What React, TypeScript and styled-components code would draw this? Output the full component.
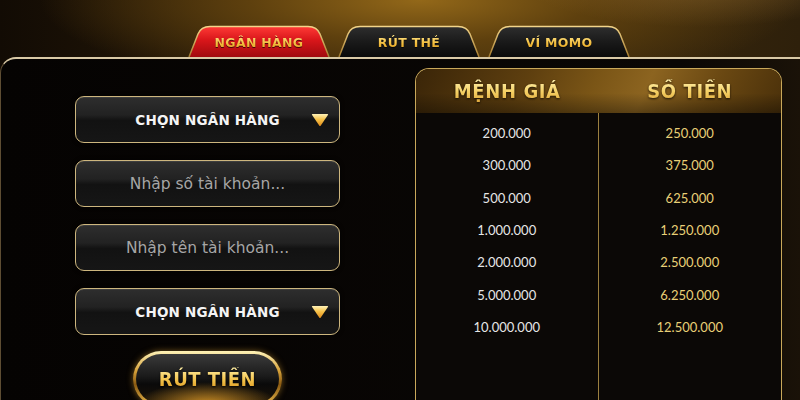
import React from "react";
import styled, { createGlobalStyle } from "styled-components";

const GlobalStyle = createGlobalStyle`
  html, body {
    margin: 0;
    padding: 0;
    background: #070504;
  }
  body {
    font-family: "DejaVu Sans", sans-serif;
  }
`;

const Page = styled.div`
  width: 800px;
  height: 400px;
  overflow: hidden;
  display: flex;
  flex-direction: column;
  background:
    radial-gradient(ellipse 260px 70px at 700px -22px, rgba(150, 110, 50, 0.55), transparent 70%),
    radial-gradient(ellipse 380px 95px at 420px 0px, #936819 0%, #5e400e 45%, transparent 100%),
    linear-gradient(90deg, #120b04 0%, #2a1c08 35%, #3e2b0c 65%, #2e200b 100%);
`;

const TabBar = styled.div`
  height: 57px;
  flex-shrink: 0;
  display: flex;
  align-items: flex-end;
  gap: 8px;
  padding-left: 188px;
  box-sizing: border-box;
`;

const TabWrap = styled.div`
  position: relative;
  width: 142px;
  height: 32px;
  display: flex;
  align-items: center;
  justify-content: center;
  padding-top: 2px;
  box-sizing: border-box;
`;

const TabShape = styled.svg`
  position: absolute;
  inset: 0;
`;

const TabLabel = styled.span`
  position: relative;
  font-family: "DejaVu Sans", sans-serif;
  font-weight: bold;
  font-size: 12.5px;
  letter-spacing: 0.3px;
  background: linear-gradient(180deg, #ffe58a 0%, #f2bb3a 60%, #d99a22 100%);
  -webkit-background-clip: text;
  background-clip: text;
  color: transparent;
  filter: drop-shadow(0 1px 0 rgba(0, 0, 0, 0.6));
`;

const Panel = styled.div`
  flex: 1;
  display: flex;
  border-top: 2px solid #d9c9a6;
  border-left: 1px solid #5e4d33;
  border-top-left-radius: 16px;
  background: linear-gradient(90deg, #050302 0%, #0a0705 85%, #1a1208 100%);
  min-height: 0;
`;

const FormCol = styled.div`
  width: 340px;
  flex-shrink: 0;
  padding: 37px 0 0 74px;
  box-sizing: border-box;
  display: flex;
  flex-direction: column;
  gap: 17px;
  align-items: flex-start;
`;

const Field = styled.div`
  position: relative;
  flex-shrink: 0;
  width: 265px;
  height: 47px;
  box-sizing: border-box;
  border: 1.5px solid #cdb67e;
  border-radius: 9px;
  background: linear-gradient(180deg, #2e2e2e 0%, #222 40%, #121212 52%, #161616 100%);
  box-shadow: inset 0 1px 0 rgba(255, 255, 255, 0.08), 0 0 4px rgba(0, 0, 0, 0.8);
  display: flex;
  align-items: center;
  justify-content: center;
`;

const SelectText = styled.span`
  font-family: "DejaVu Sans", sans-serif;
  font-weight: bold;
  font-size: 13.5px;
  color: #f4f4f4;
  letter-spacing: 0.2px;
`;

const Placeholder = styled.span`
  font-family: "DejaVu Sans", sans-serif;
  font-size: 15.5px;
  color: #a6a6a6;
`;

const Arrow = styled.svg`
  position: absolute;
  right: 10px;
  top: 50%;
  margin-top: -7px;
`;

const WithdrawButton = styled.button`
  flex-shrink: 0;
  margin: -1px 0 0 58px;
  width: 149px;
  height: 56px;
  border-radius: 28px;
  border: 3px solid transparent;
  background:
    radial-gradient(ellipse 70px 22px at 50% 100%, rgba(230, 160, 40, 0.85), transparent 100%) padding-box,
    linear-gradient(180deg, #3a3a3a 0%, #1a1a1a 45%, #0a0a0a 60%, #1c1408 100%) padding-box,
    linear-gradient(180deg, #fff3b8 0%, #d7a23a 35%, #8a5a12 60%, #f0c050 100%) border-box;
  box-shadow: 0 0 6px rgba(220, 160, 50, 0.5);
  display: flex;
  align-items: flex-start;
  justify-content: center;
  padding: 13px 0 0;
  cursor: pointer;
`;

const ButtonLabel = styled.span`
  font-family: "DejaVu Sans Condensed", "DejaVu Sans", sans-serif;
  font-weight: bold;
  font-size: 20px;
  letter-spacing: 0.5px;
  background: linear-gradient(180deg, #fff0a8 0%, #f3c24a 55%, #d8921c 100%);
  -webkit-background-clip: text;
  background-clip: text;
  color: transparent;
  filter: drop-shadow(0 1px 1px rgba(0, 0, 0, 0.8));
`;

const Table = styled.div`
  margin: 9px 0 0 74px;
  width: 367px;
  height: 350px;
  flex-shrink: 0;
  box-sizing: border-box;
  border: 1.5px solid #c9a85a;
  border-bottom: none;
  border-radius: 14px 14px 0 0;
  overflow: hidden;
  display: flex;
  flex-direction: column;
  background: #0b0806;
`;

const TableHead = styled.div`
  height: 44px;
  flex-shrink: 0;
  display: grid;
  grid-template-columns: 1fr 1fr;
  align-items: center;
  background:
    linear-gradient(180deg, rgba(0, 0, 0, 0) 55%, rgba(0, 0, 0, 0.35) 100%),
    linear-gradient(115deg, #3a2508 0%, #5e3f0f 30%, #7a5516 48%, #8c6420 62%, #6a4812 80%, #4a300a 100%);
`;

const HeadCell = styled.div`
  text-align: center;
  font-family: "DejaVu Sans Condensed", "DejaVu Sans", sans-serif;
  font-weight: bold;
  font-size: 20px;
  letter-spacing: 0.6px;
  background: linear-gradient(180deg, #fff2b0 0%, #f5cf62 55%, #dca43a 100%);
  -webkit-background-clip: text;
  background-clip: text;
  color: transparent;
  filter: drop-shadow(0 1px 1px rgba(0, 0, 0, 0.7));
`;

const TableBody = styled.div`
  flex: 1;
  display: grid;
  grid-template-columns: 1fr 1fr;
`;

const Column = styled.div<{ $divider?: boolean }>`
  padding-top: 4px;
  display: flex;
  flex-direction: column;
  border-right: ${(p) => (p.$divider ? "1px solid #9c8040" : "none")};
`;

const Cell = styled.div<{ $gold?: boolean }>`
  height: 32.3px;
  flex-shrink: 0;
  display: flex;
  align-items: center;
  justify-content: center;
  font-family: Lato, "DejaVu Sans", sans-serif;
  font-size: 13px;
  color: ${(p) => (p.$gold ? "#e9d077" : "#e6e6e6")};
`;

type TabProps = { label: string; active?: boolean; id: string };

const Tab = ({ label, active, id }: TabProps) => (
  <TabWrap>
    <TabShape width="142" height="32" viewBox="0 0 142 32">
      <defs>
        <linearGradient id={`fill-${id}`} x1="0" y1="0" x2="0" y2="1">
          {active ? (
            <>
              <stop offset="0" stopColor="#ff3a36" />
              <stop offset="0.45" stopColor="#d8161a" />
              <stop offset="1" stopColor="#a10a0e" />
            </>
          ) : (
            <>
              <stop offset="0" stopColor="#2e2e2e" />
              <stop offset="0.5" stopColor="#1a1a1a" />
              <stop offset="1" stopColor="#0a0a0a" />
            </>
          )}
        </linearGradient>
        <linearGradient id={`stroke-${id}`} x1="0" y1="0" x2="0" y2="1">
          <stop offset="0" stopColor="#f3d58a" />
          <stop offset="1" stopColor="#a67c2e" />
        </linearGradient>
      </defs>
      <path
        d="M1 32 L10 9 Q13 1.5 22 1.5 L120 1.5 Q129 1.5 132 9 L141 32"
        fill={`url(#fill-${id})`}
        stroke={`url(#stroke-${id})`}
        strokeWidth="1.5"
      />
    </TabShape>
    <TabLabel>{label}</TabLabel>
  </TabWrap>
);

const DropArrow = () => (
  <Arrow width="18" height="14" viewBox="0 0 18 14">
    <defs>
      <linearGradient id="arrowFill" x1="0" y1="0" x2="0" y2="1">
        <stop offset="0" stopColor="#fff2b8" />
        <stop offset="0.45" stopColor="#f6c24a" />
        <stop offset="1" stopColor="#e08a18" />
      </linearGradient>
    </defs>
    <path d="M1.5 1 L16.5 1 Q17.5 1 16.9 2 L9.8 12.6 Q9 13.6 8.2 12.6 L1.1 2 Q0.5 1 1.5 1 Z" fill="url(#arrowFill)" />
  </Arrow>
);

const rates = [
  ["200.000", "250.000"],
  ["300.000", "375.000"],
  ["500.000", "625.000"],
  ["1.000.000", "1.250.000"],
  ["2.000.000", "2.500.000"],
  ["5.000.000", "6.250.000"],
  ["10.000.000", "12.500.000"],
];

const App = () => {
  return (
    <>
      <GlobalStyle />
      <Page>
        <TabBar>
          <Tab id="bank" label="NGÂN HÀNG" active />
          <Tab id="card" label="RÚT THẺ" />
          <Tab id="momo" label="VÍ MOMO" />
        </TabBar>
        <Panel>
          <FormCol>
            <Field>
              <SelectText>CHỌN NGÂN HÀNG</SelectText>
              <DropArrow />
            </Field>
            <Field>
              <Placeholder>Nhập số tài khoản...</Placeholder>
            </Field>
            <Field>
              <Placeholder>Nhập tên tài khoản...</Placeholder>
            </Field>
            <Field>
              <SelectText>CHỌN NGÂN HÀNG</SelectText>
              <DropArrow />
            </Field>
            <WithdrawButton>
              <ButtonLabel>RÚT TIỀN</ButtonLabel>
            </WithdrawButton>
          </FormCol>
          <Table>
            <TableHead>
              <HeadCell>MỆNH GIÁ</HeadCell>
              <HeadCell>SỐ TIỀN</HeadCell>
            </TableHead>
            <TableBody>
              <Column $divider>
                {rates.map(([value]) => (
                  <Cell key={value}>{value}</Cell>
                ))}
              </Column>
              <Column>
                {rates.map(([, amount]) => (
                  <Cell key={amount} $gold>
                    {amount}
                  </Cell>
                ))}
              </Column>
            </TableBody>
          </Table>
        </Panel>
      </Page>
    </>
  );
};

export default App;
